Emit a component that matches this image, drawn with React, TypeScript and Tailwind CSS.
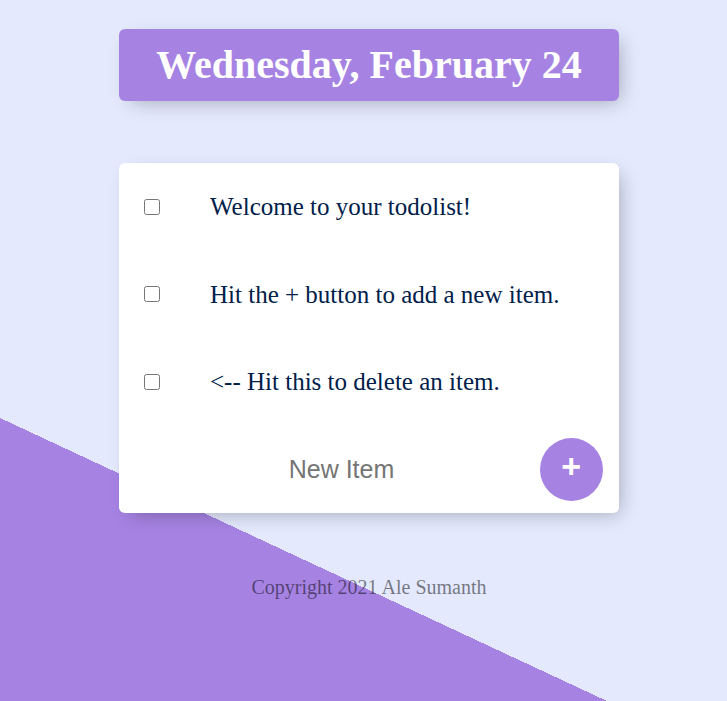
import { useState } from "react";

const items = [
  "Welcome to your todolist!",
  "Hit the + button to add a new item.",
  "<-- Hit this to delete an item.",
];

export default function App() {
  const [newItem, setNewItem] = useState("");

  return (
    <div className="h-screen w-full overflow-hidden bg-[#E4E9FD] bg-[linear-gradient(25deg,#A683E3_256.5px,#E4E9FD_256.5px)] font-['Liberation_Serif',serif]">
      <div className="ml-[119px] w-[500px] pt-[29px]">
        {/* Heading */}
        <div className="h-[72px] rounded-[6px] bg-[#A683E3] shadow-[6px_6px_19px_-6px_rgba(0,0,0,0.3)] flex items-center justify-center">
          <h1 className="text-[40px] font-bold text-white leading-none">
            Wednesday, February 24
          </h1>
        </div>

        {/* Todo card */}
        <div className="mt-[62px] rounded-[6px] bg-white shadow-[6px_6px_19px_-6px_rgba(0,0,0,0.3)]">
          {items.map((item) => (
            <div key={item} className="h-[87.5px] flex items-center">
              <input type="checkbox" className="ml-[25px] w-[16px] h-[16px]" />
              <p className="ml-[50px] text-[25px] text-[#00204a]">{item}</p>
            </div>
          ))}

          {/* New item form */}
          <form
            className="h-[87.5px] flex items-center"
            onSubmit={(e) => e.preventDefault()}
          >
            <input
              type="text"
              value={newItem}
              onChange={(e) => setNewItem(e.target.value)}
              placeholder="New Item"
              className="ml-[25px] w-[395px] h-[75px] text-center text-[25px] font-['Liberation_Sans',Arial,sans-serif] text-[#00204a] placeholder:text-[#757575] outline-none"
            />
            <button
              type="submit"
              className="ml-[1px] w-[62.5px] h-[62.5px] rounded-full bg-[#A683E3] text-white text-[34px] font-bold leading-none pb-[7px] font-['Liberation_Sans',Arial,sans-serif] flex items-center justify-center"
            >
              +
            </button>
          </form>
        </div>

        {/* Footer */}
        <footer className="mt-[59px] text-center text-[20px] text-black/50">
          Copyright 2021 Ale Sumanth
        </footer>
      </div>
    </div>
  );
}
